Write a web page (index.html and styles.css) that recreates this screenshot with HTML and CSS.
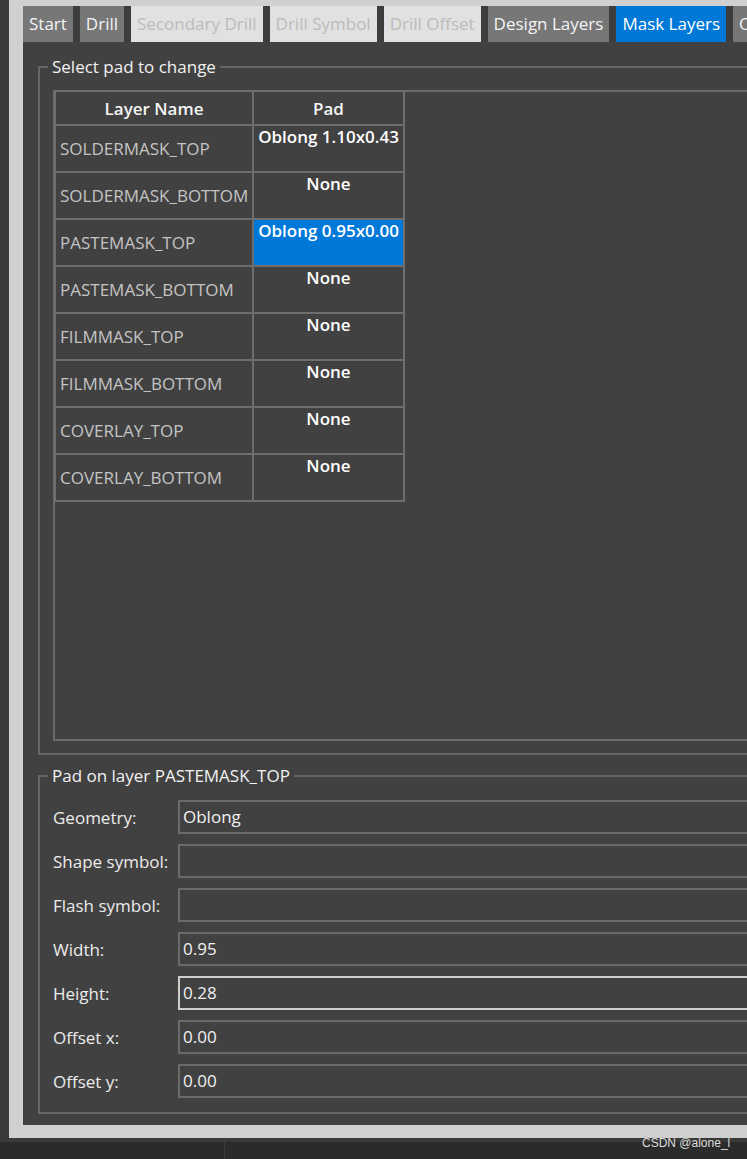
FILE: index.html
```html
<!DOCTYPE html>
<html>
<head>
<meta charset="utf-8">
<link rel="stylesheet" href="styles.css">
</head>
<body>
<div class="app">
  <div class="frame">
    <div class="panel">
      <div class="tabs">
        <div class="tab">Start</div>
        <div class="tab">Drill</div>
        <div class="tab disabled">Secondary Drill</div>
        <div class="tab disabled">Drill Symbol</div>
        <div class="tab disabled">Drill Offset</div>
        <div class="tab">Design Layers</div>
        <div class="tab active">Mask Layers</div>
        <div class="tab">Options</div>
      </div>

      <fieldset class="group group-select">
        <legend>Select pad to change</legend>
        <div class="list">
          <table class="grid">
            <thead>
              <tr><th class="c-name">Layer Name</th><th class="c-pad">Pad</th></tr>
            </thead>
            <tbody>
              <tr><td class="c-name">SOLDERMASK_TOP</td><td class="c-pad">Oblong 1.10x0.43</td></tr>
              <tr><td class="c-name">SOLDERMASK_BOTTOM</td><td class="c-pad">None</td></tr>
              <tr><td class="c-name">PASTEMASK_TOP</td><td class="c-pad selected">Oblong 0.95x0.00</td></tr>
              <tr><td class="c-name">PASTEMASK_BOTTOM</td><td class="c-pad">None</td></tr>
              <tr><td class="c-name">FILMMASK_TOP</td><td class="c-pad">None</td></tr>
              <tr><td class="c-name">FILMMASK_BOTTOM</td><td class="c-pad">None</td></tr>
              <tr><td class="c-name">COVERLAY_TOP</td><td class="c-pad">None</td></tr>
              <tr><td class="c-name">COVERLAY_BOTTOM</td><td class="c-pad">None</td></tr>
            </tbody>
          </table>
        </div>
      </fieldset>

      <fieldset class="group group-pad">
        <legend>Pad on layer PASTEMASK_TOP</legend>
        <div class="form">
          <div class="row"><span class="label">Geometry:</span><div class="field">Oblong</div></div>
          <div class="row"><span class="label">Shape symbol:</span><div class="field"></div></div>
          <div class="row"><span class="label">Flash symbol:</span><div class="field"></div></div>
          <div class="row"><span class="label">Width:</span><div class="field">0.95</div></div>
          <div class="row"><span class="label">Height:</span><div class="field focus">0.28</div></div>
          <div class="row"><span class="label">Offset x:</span><div class="field">0.00</div></div>
          <div class="row"><span class="label">Offset y:</span><div class="field">0.00</div></div>
        </div>
      </fieldset>
    </div>
  </div>
</div>
<div class="status"><div class="seg"></div><div class="seg"></div></div>
<div class="watermark">CSDN @alone_l</div>
</body>
</html>
```

FILE: styles.css
```css
* { box-sizing: border-box; }

html, body {
  margin: 0;
  padding: 0;
}

body {
  width: 747px;
  height: 1159px;
  overflow: hidden;
  background: #3b3b3b;
  font-family: "Open Sans", "Noto Sans", "DejaVu Sans", sans-serif;
  font-size: 17px;
  color: #ececec;
  position: relative;
}

.app {
  height: 1138px;
  padding-left: 9px;
  background: #3b3b3b;
  display: flex;
}

.frame {
  flex: 1;
  min-width: 0;
  background: #d0d0d0;
  padding: 6px 0 13px 14px;
  overflow: hidden;
  display: flex;
}

.panel {
  flex: 0 0 900px;
  height: 1119px;
  background: #414141;
  display: flex;
  flex-direction: column;
}

/* Tabs */
.tabs {
  display: flex;
  gap: 7px;
  height: 36px;
  background: #3d3d3d;
  flex: 0 0 36px;
}

.tab {
  height: 36px;
  line-height: 35px;
  padding: 0 6px;
  background: #777777;
  color: #f4f4f4;
  white-space: nowrap;
}

.tab.disabled {
  background: #e1e1e1;
  color: #bcbcbc;
}

.tab.active {
  background: #0078d7;
  color: #ffffff;
}

/* Group boxes */
.group {
  margin: 0 0 0 15px;
  border: 2px solid #666666;
  border-right: none;
  min-width: 0;
  padding-left: 0;
  padding-right: 0;
}

.group legend {
  margin-left: 8px;
  padding: 0 4px;
  line-height: 22px;
  color: #f2f2f2;
}

.group-select {
  margin-top: 14px;
  padding-top: 12px;
  padding-bottom: 12px;
}

.group-pad {
  margin-top: 10px;
  padding-top: 13px;
  padding-bottom: 14px;
}

/* List */
.list {
  margin-left: 13px;
  height: 651px;
  border: 2px solid #6a6a6a;
  border-right: none;
}

.grid {
  border-collapse: separate;
  border-spacing: 0;
  margin: -2px 0 0 -1px;
  border-top: 2px solid #6e6e6e;
  border-left: 2px solid #6e6e6e;
}

.grid th,
.grid td {
  border-right: 2px solid #6e6e6e;
  border-bottom: 2px solid #6e6e6e;
  padding: 0;
}

.grid th {
  height: 34px;
  font-weight: 600;
  color: #f4f4f4;
  text-align: center;
}

.grid td {
  height: 47px;
}

.c-name { width: 198px; }
.c-pad { width: 151px; }

.grid td.c-name {
  padding-left: 4px;
  color: #c4c4c4;
  vertical-align: middle;
}

.grid td.c-pad {
  vertical-align: top;
  text-align: center;
  font-weight: 600;
  color: #ffffff;
  line-height: 19px;
  padding-top: 1px;
}

.grid td.selected {
  background: #0078d7;
}

/* Form */
.form {
  margin-left: 13px;
  display: flex;
  flex-direction: column;
  gap: 10px;
}

.row {
  display: flex;
  align-items: center;
  height: 34px;
}

.label {
  flex: 0 0 125px;
  color: #ececec;
}

.field {
  flex: 1;
  height: 34px;
  border: 2px solid #6a6a6a;
  border-right: none;
  padding-left: 3px;
  line-height: 30px;
  color: #f0f0f0;
}

.field.focus {
  border-color: #cfcfcf;
}

/* Status bar */
.status {
  height: 21px;
  border-top: 4px solid #3a3a3a;
  background: #2b2b2b;
  display: flex;
}

.status .seg {
  width: 225px;
  border-right: 1px solid #3c3c3c;
}

.status .seg:last-child {
  flex: 1;
  border-right: none;
}

.watermark {
  position: absolute;
  left: 642px;
  top: 1136px;
  font-family: "Liberation Sans", Arial, sans-serif;
  font-size: 12px;
  color: #dcdcdc;
  text-shadow: 0 0 1px #333;
}
```
